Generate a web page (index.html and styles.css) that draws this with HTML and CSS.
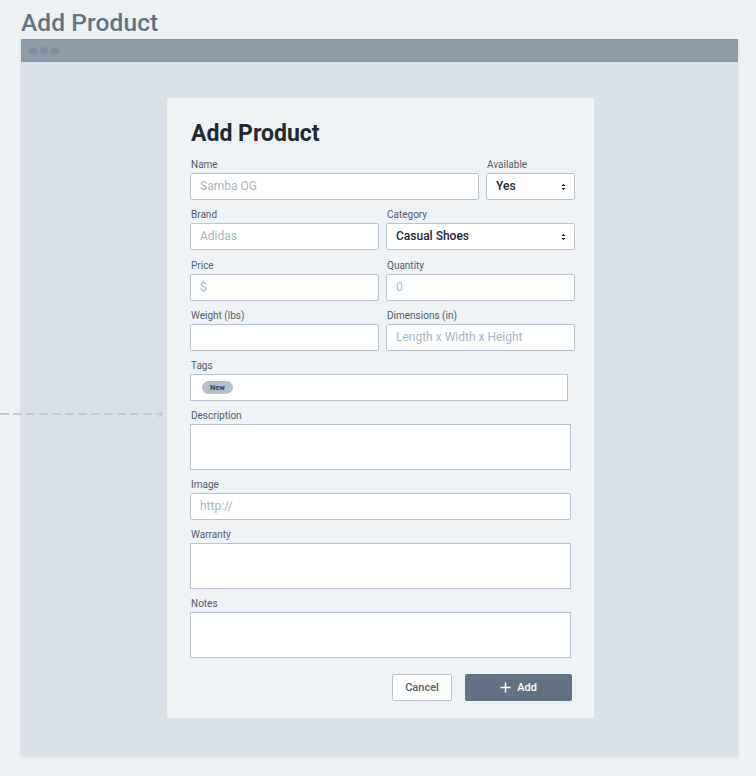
FILE: index.html
```html
<!DOCTYPE html>
<html>
<head>
<meta charset="utf-8">
<link rel="stylesheet" href="styles.css">
</head>
<body>
<div class="page">
  <h1 class="page-title">Add Product</h1>
  <div class="window">
    <div class="window-bar">
      <span class="dot"></span><span class="dot"></span><span class="dot"></span>
    </div>
    <div class="window-body">
      <form class="card">
        <h2 class="card-title">Add Product</h2>
        <div class="row">
          <div class="field grow"><label>Name</label><div class="input ph">Samba OG</div></div>
          <div class="field w89"><label>Available</label><div class="input select">Yes<span class="chev"><svg width="5" height="8" viewBox="0 0 5 8"><path d="M0.5 3L2.5 0.8L4.5 3Z M0.5 5L2.5 7.2L4.5 5Z" fill="#1f2933"/></svg></span></div></div>
        </div>
        <div class="row">
          <div class="field half"><label>Brand</label><div class="input ph">Adidas</div></div>
          <div class="field half"><label>Category</label><div class="input select">Casual Shoes<span class="chev"><svg width="5" height="8" viewBox="0 0 5 8"><path d="M0.5 3L2.5 0.8L4.5 3Z M0.5 5L2.5 7.2L4.5 5Z" fill="#1f2933"/></svg></span></div></div>
        </div>
        <div class="row row-shift">
          <div class="field half"><label>Price</label><div class="input ph">$</div></div>
          <div class="field half"><label>Quantity</label><div class="input ph">0</div></div>
        </div>
        <div class="row">
          <div class="field half"><label>Weight (lbs)</label><div class="input"></div></div>
          <div class="field half"><label>Dimensions (in)</label><div class="input ph">Length x Width x Height</div></div>
        </div>
        <div class="field w378"><label>Tags</label><div class="input tags"><span class="tag">New</span></div></div>
        <div class="field w381"><label>Description</label><div class="input area"></div></div>
        <div class="field w381"><label>Image</label><div class="input ph">http://</div></div>
        <div class="field w381"><label>Warranty</label><div class="input area"></div></div>
        <div class="field w381"><label>Notes</label><div class="input area"></div></div>
        <div class="actions">
          <button type="button" class="btn cancel">Cancel</button>
          <button type="button" class="btn add"><svg width="11" height="11" viewBox="0 0 11 11"><path d="M5.5 0.5V10.5M0.5 5.5H10.5" stroke="#fff" stroke-width="1.6"/></svg>Add</button>
        </div>
      </form>
    </div>
  </div>
  <div class="arrow"><span class="dash-line"></span><svg width="8" height="8" viewBox="0 0 8 8"><path d="M0 4H7M4 1L7 4L4 7" stroke="#c3ccd5" stroke-width="1.6" fill="none"/></svg></div>
</div>
</body>
</html>
```

FILE: styles.css
```css
* { box-sizing: border-box; }
html, body { margin: 0; padding: 0; }
body {
  background: #edf1f4;
  font-family: Roboto, "Liberation Sans", sans-serif;
  width: 756px;
  height: 776px;
  overflow: hidden;
}
.page {
  position: relative;
  padding: 0 18px 0 21px;
}
.page-title {
  margin: 0;
  height: 39px;
  padding-top: 9px;
  font-size: 24.5px;
  line-height: 28px;
  font-weight: 500;
  color: #627384;
  letter-spacing: 0.1px;
}
.window {
  width: 717px;
  height: 717px;
  background: #d9e0e7;
  box-shadow: 0 1px 3px rgba(80, 100, 120, 0.15);
  display: flex;
  flex-direction: column;
}
.window-bar {
  height: 23px;
  background: #8d9ba8;
  display: flex;
  align-items: center;
  gap: 3px;
  padding-left: 8px;
}
.dot {
  width: 8px;
  height: 8px;
  border-radius: 50%;
  background: #7f8e9c;
}
.window-body {
  flex: 1;
  display: flex;
  justify-content: center;
  padding-top: 36px;
  padding-left: 2px;
}
.card {
  width: 427px;
  height: 620px;
  background: #eef2f5;
  padding: 21px 19px 0 23px;
  display: flex;
  flex-direction: column;
  gap: 8px;
}
.card-title {
  margin: 0 0 1px 1px;
  font-size: 23px;
  line-height: 30px;
  font-weight: 700;
  color: #1f2933;
}
.row {
  display: flex;
  gap: 7px;
}
.row-shift { margin-top: 1px; }
.field {
  display: flex;
  flex-direction: column;
}
.field label {
  font-size: 10px;
  line-height: 14px;
  height: 15px;
  color: #52606d;
  padding-left: 1px;
}
.grow { flex: 1; }
.w89 { width: 89px; }
.half { width: 189px; }
.w378 { width: 378px; }
.w381 { width: 381px; }
.input {
  height: 27px;
  background: #fff;
  border: 1px solid #b9c4cf;
  border-radius: 2px;
  font-size: 12px;
  line-height: 25px;
  padding: 0 9px;
  color: #1f2933;
  display: flex;
  align-items: center;
}
.ph { color: #a9b6c2; }
.select { justify-content: space-between; font-weight: 500; padding-right: 8px; }
.chev { display: flex; align-items: center; }
.tags { padding-left: 11px; border-radius: 0; }
.tag {
  background: #b4bfca;
  color: #323f4b;
  font-size: 7.5px;
  font-weight: 700;
  line-height: 13px;
  height: 13px;
  padding: 0 8px;
  border-radius: 7px;
}
.area { height: 46px; border-radius: 0; }
.actions {
  display: flex;
  justify-content: flex-end;
  gap: 13px;
  margin-top: 8px;
  padding-right: 3px;
}
.btn {
  height: 27px;
  border-radius: 2px;
  font-family: Roboto, "Liberation Sans", sans-serif;
  font-size: 11px;
  font-weight: 500;
  display: flex;
  align-items: center;
  justify-content: center;
  gap: 6px;
  cursor: pointer;
}
.cancel {
  width: 60px;
  background: #fff;
  border: 1px solid #b9c4cf;
  color: #52606d;
}
.add {
  width: 107px;
  background: #627282;
  border: none;
  color: #fff;
}
.arrow {
  position: absolute;
  left: 0;
  top: 410px;
  display: flex;
  align-items: center;
  width: 163px;
}
.dash-line {
  flex: 1;
  height: 2px;
  background: repeating-linear-gradient(to right, #c3ccd5 0 9px, transparent 9px 13px);
}
```
